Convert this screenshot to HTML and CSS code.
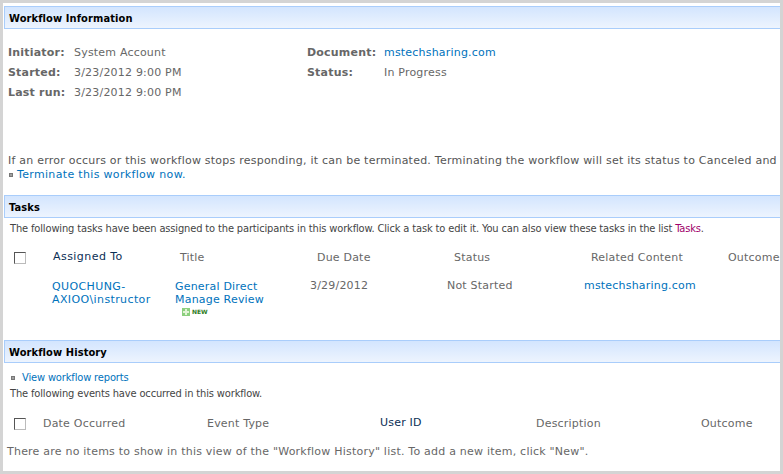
FILE: index.html
```html
<!DOCTYPE html>
<html lang="en">
<head>
<meta charset="utf-8">
<title>Workflow Status</title>
<link rel="stylesheet" href="styles.css">
</head>
<body>
<main class="panel">
  <h2 class="band band-first">Workflow Information</h2>
  <section class="info">
    <dl class="facts facts-left">
      <dt>Initiator:</dt><dd>System Account</dd>
      <dt>Started:</dt><dd>3/23/2012 9:00 PM</dd>
      <dt>Last run:</dt><dd>3/23/2012 9:00 PM</dd>
    </dl>
    <dl class="facts facts-right">
      <dt>Document:</dt><dd><a href="#">mstechsharing.com</a></dd>
      <dt>Status:</dt><dd>In Progress</dd>
    </dl>
  </section>
  <p class="warning">If an error occurs or this workflow stops responding, it can be terminated. Terminating the workflow will set its status to Canceled and</p>
  <p class="action action-terminate"><span class="bullet"></span><a class="wide" href="#">Terminate this workflow now.</a></p>

  <h2 class="band band-tasks">Tasks</h2>
  <p class="note note-tasks">The following tasks have been assigned to the participants in this workflow. Click a task to edit it. You can also view these tasks in the list <a class="visited" href="#">Tasks</a>.</p>
  <div class="grid grid-tasks-head">
    <span class="check"></span>
    <span class="th dark wide-th">Assigned To</span>
    <span class="th">Title</span>
    <span class="th">Due Date</span>
    <span class="th">Status</span>
    <span class="th">Related Content</span>
    <span class="th">Outcome</span>
  </div>
  <div class="grid grid-tasks-row">
    <span></span>
    <a class="person" href="#">QUOCHUNG-<br>AXIOO\instructor</a>
    <div class="item"><a href="#">General Direct<br>Manage Review</a>
      <div class="new"><svg width="8" height="8" viewBox="0 0 8 8" aria-hidden="true"><rect width="8" height="8" fill="#8ccf7e"/><path d="M3 1h2v2h2v2H5v2H3V5H1V3h2z" fill="#e2f4d6"/></svg><span>NEW</span></div>
    </div>
    <span>3/29/2012</span>
    <span>Not Started</span>
    <a href="#">mstechsharing.com</a>
  </div>

  <h2 class="band band-history">Workflow History</h2>
  <p class="action action-reports"><span class="bullet"></span><a class="narrow" href="#">View workflow reports</a></p>
  <p class="note note-history">The following events have occurred in this workflow.</p>
  <div class="grid grid-history">
    <span class="check"></span>
    <span class="th">Date Occurred</span>
    <span class="th">Event Type</span>
    <span class="th dark">User ID</span>
    <span class="th">Description</span>
    <span class="th">Outcome</span>
  </div>
  <p class="empty">There are no items to show in this view of the "Workflow History" list. To add a new item, click "New".</p>
</main>
</body>
</html>
```
FILE: styles.css
```css
* { box-sizing: border-box; }
html, body { height: 100%; }
body {
  margin: 0;
  padding: 3px;
  background: #d4d4d4;
  overflow: hidden;
  font: 11px/13px "DejaVu Sans", Verdana, sans-serif;
  letter-spacing: 0.2px;
  color: #676767;
}
a { color: #0072bc; text-decoration: none; }
a.visited { color: #a0006b; }
.panel { height: 100%; background: #fff; padding: 3px 0 0 1px; white-space: nowrap; overflow: hidden; }
.band {
  margin: 0;
  height: 23px;
  padding-left: 4px;
  border: 1px solid #a9cdfb;
  border-width: 1px 0 1px 1px;
  background: linear-gradient(#d3e5fe, #edf4fe);
  font: bold 11px/23px Tahoma, "DejaVu Sans Condensed", "DejaVu Sans", sans-serif;
  letter-spacing: 0.1px;
  color: #000;
}
.info { display: grid; grid-template-columns: 299px auto; padding: 13px 0 0 4px; height: 125px; }
.facts { margin: 0; display: grid; grid-template-rows: repeat(3, 20px); align-content: start; align-items: center; }
.facts-left { grid-template-columns: 66px auto; }
.facts-right { grid-template-columns: 77px auto; }
.facts dt { font-weight: bold; }
.facts dd { margin: 0; }
.warning { margin: 0; padding-left: 4px; color: #555; letter-spacing: 0.23px; }
.action { margin: 1px 0 0; display: flex; align-items: center; }
.action-terminate { padding-left: 5px; }
.wide { letter-spacing: 0.33px; }
.bullet { width: 4px; height: 4px; margin-right: 4px; background: #a0a0a0; border: 1px solid #777; }
.band-tasks { margin-top: 14px; }
.note { margin: 0; font-family: Tahoma, "DejaVu Sans Condensed", sans-serif; letter-spacing: -0.14px; color: #444; }
.note-tasks { padding: 4px 0 0 6px; }
.grid { display: grid; align-items: start; }
.grid-tasks-head { grid-template-columns: 49px 127px 137px 137px 137px 137px auto; margin-top: 16px; }
.grid-tasks-row { grid-template-columns: 48px 123px 135px 137px 137px auto; margin-top: 15px; height: 49px; }
.person { margin-top: 1px; letter-spacing: 0.38px; }
.item { margin-top: 1px; }
.check { width: 12px; height: 12px; margin: 1px 0 0 10px; border: 1px solid; border-color: #555 #bbb #bbb #555; background: #fff; }
.th.dark { color: #0b2f55; margin-top: -1px; }
.wide-th { letter-spacing: 0.45px; }
.band-history { margin-top: 12px; }
.action-reports { padding: 7px 0 0 7px; }
.action-reports .bullet { margin-right: 7px; }
.narrow { font-family: Tahoma, "DejaVu Sans Condensed", sans-serif; letter-spacing: -0.14px; }
.new { display: flex; align-items: center; gap: 2px; margin: 2px 0 0 7px; font: bold 6px/8px "DejaVu Sans", sans-serif; letter-spacing: 0; color: #2e7d1e; }
.note-history { padding: 3px 0 0 6px; }
.grid-history { grid-template-columns: 39px 164px 173px 156px 165px auto; margin-top: 17px; }
.empty { margin: 15px 0 0 3px; letter-spacing: 0.22px; }
```
